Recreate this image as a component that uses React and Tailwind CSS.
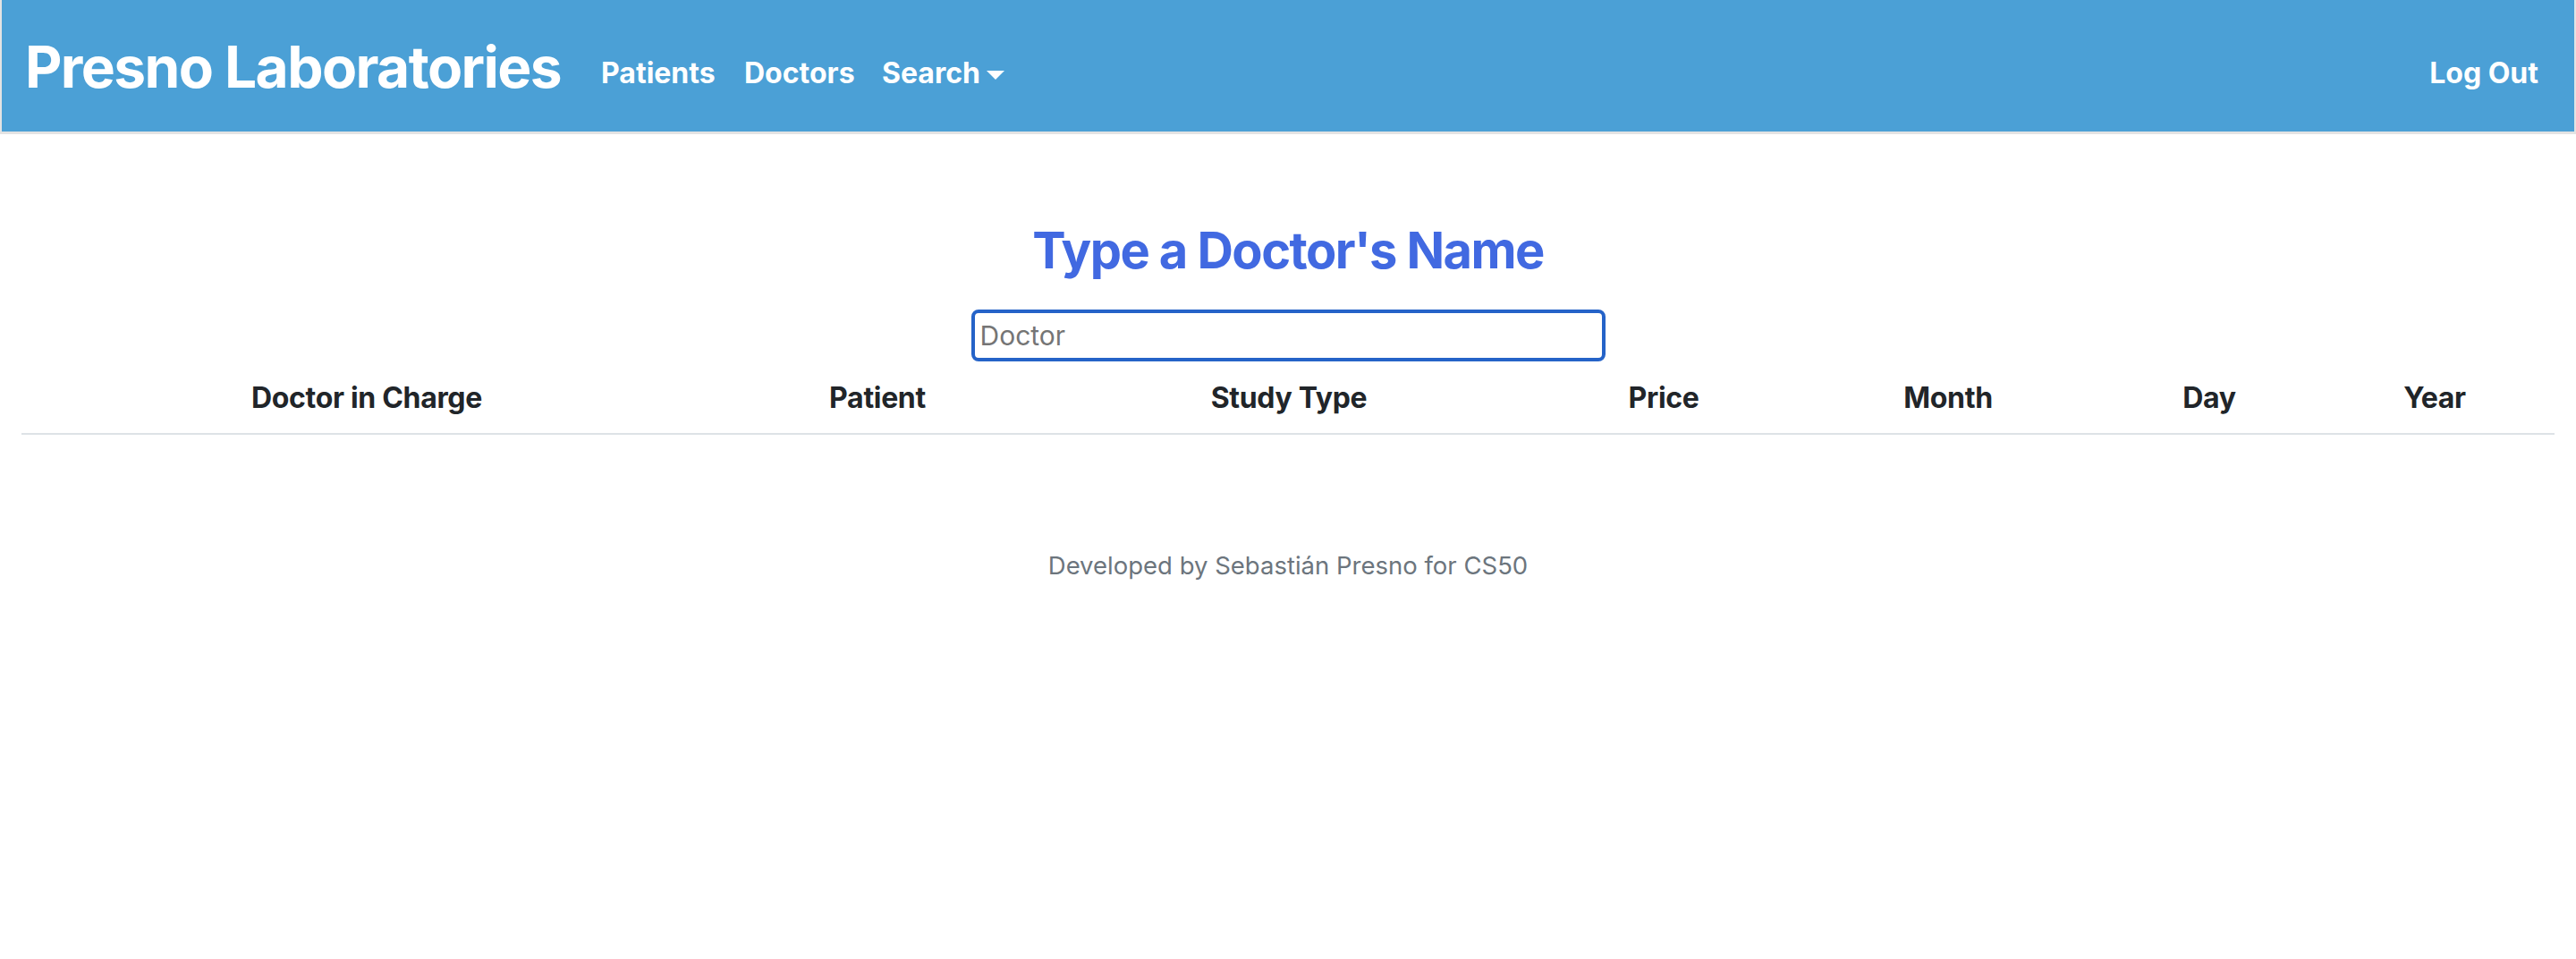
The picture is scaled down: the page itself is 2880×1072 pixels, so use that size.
export default function App() {
  const cols = [
    ["Doctor in Charge", "w-[772px]"],
    ["Patient", "w-[370px]"],
    ["Study Type", "w-[550px]"],
    ["Price", "w-[288px]"],
    ["Month", "w-[348px]"],
    ["Day", "w-[236px]"],
    ["Year", "w-[268px]"],
  ];
  return (
    <div className="font-['Inter',sans-serif] bg-white min-h-screen">
      <nav className="h-[150px] bg-[#4ba0d6] border-x-2 border-b-[3px] border-[#e3e3e3] flex items-start pl-[26px] pr-[40px] text-white font-bold">
        <a className="w-[644px] mt-[36px] text-[64px] leading-[77px] tracking-[-0.025em]">Presno Laboratories</a>
        <a className="w-[160px] mt-[58px] text-[32px] leading-[48px]">Patients</a>
        <a className="w-[154px] mt-[58px] text-[32px] leading-[48px]">Doctors</a>
        <a className="mt-[58px] text-[32px] leading-[48px] flex items-center">
          Search
          <span className="ml-[7px] mt-[3px] w-0 h-0 border-t-[10px] border-t-white border-x-[10px] border-x-transparent"></span>
        </a>
        <a className="ml-auto mt-[58px] text-[32px] leading-[48px]">Log Out</a>
      </nav>
      <main className="px-[24px]">
        <h2 className="mt-[97px] text-center text-[56px] leading-[67px] font-bold text-[#4169e1] tracking-[-0.028em]">
          Type a Doctor's Name
        </h2>
        <div className="mt-[32px] flex justify-center">
          <input
            className="w-[709px] h-[58px] border-[4px] border-[#2563c8] rounded-[8px] pl-[6px] text-[30px] text-[#212529] placeholder:text-[#757575] outline-none"
            placeholder="Doctor"
          />
        </div>
        <table className="w-full table-fixed border-collapse">
          <thead>
            <tr className="border-b-2 border-[#dee2e6]">
              {cols.map(([t, w]) => (
                <th key={t} className={`${w} pt-[17px] pb-[15px] text-center text-[32px] leading-[48px] font-bold text-[#212529] tracking-[-0.01em]`}>
                  {t}
                </th>
              ))}
            </tr>
          </thead>
          <tbody></tbody>
        </table>
        <p className="mt-[125px] text-center text-[27.5px] leading-[42px] text-[#6c757d]">
          Developed by Sebastián Presno for CS50
        </p>
      </main>
    </div>
  );
}
